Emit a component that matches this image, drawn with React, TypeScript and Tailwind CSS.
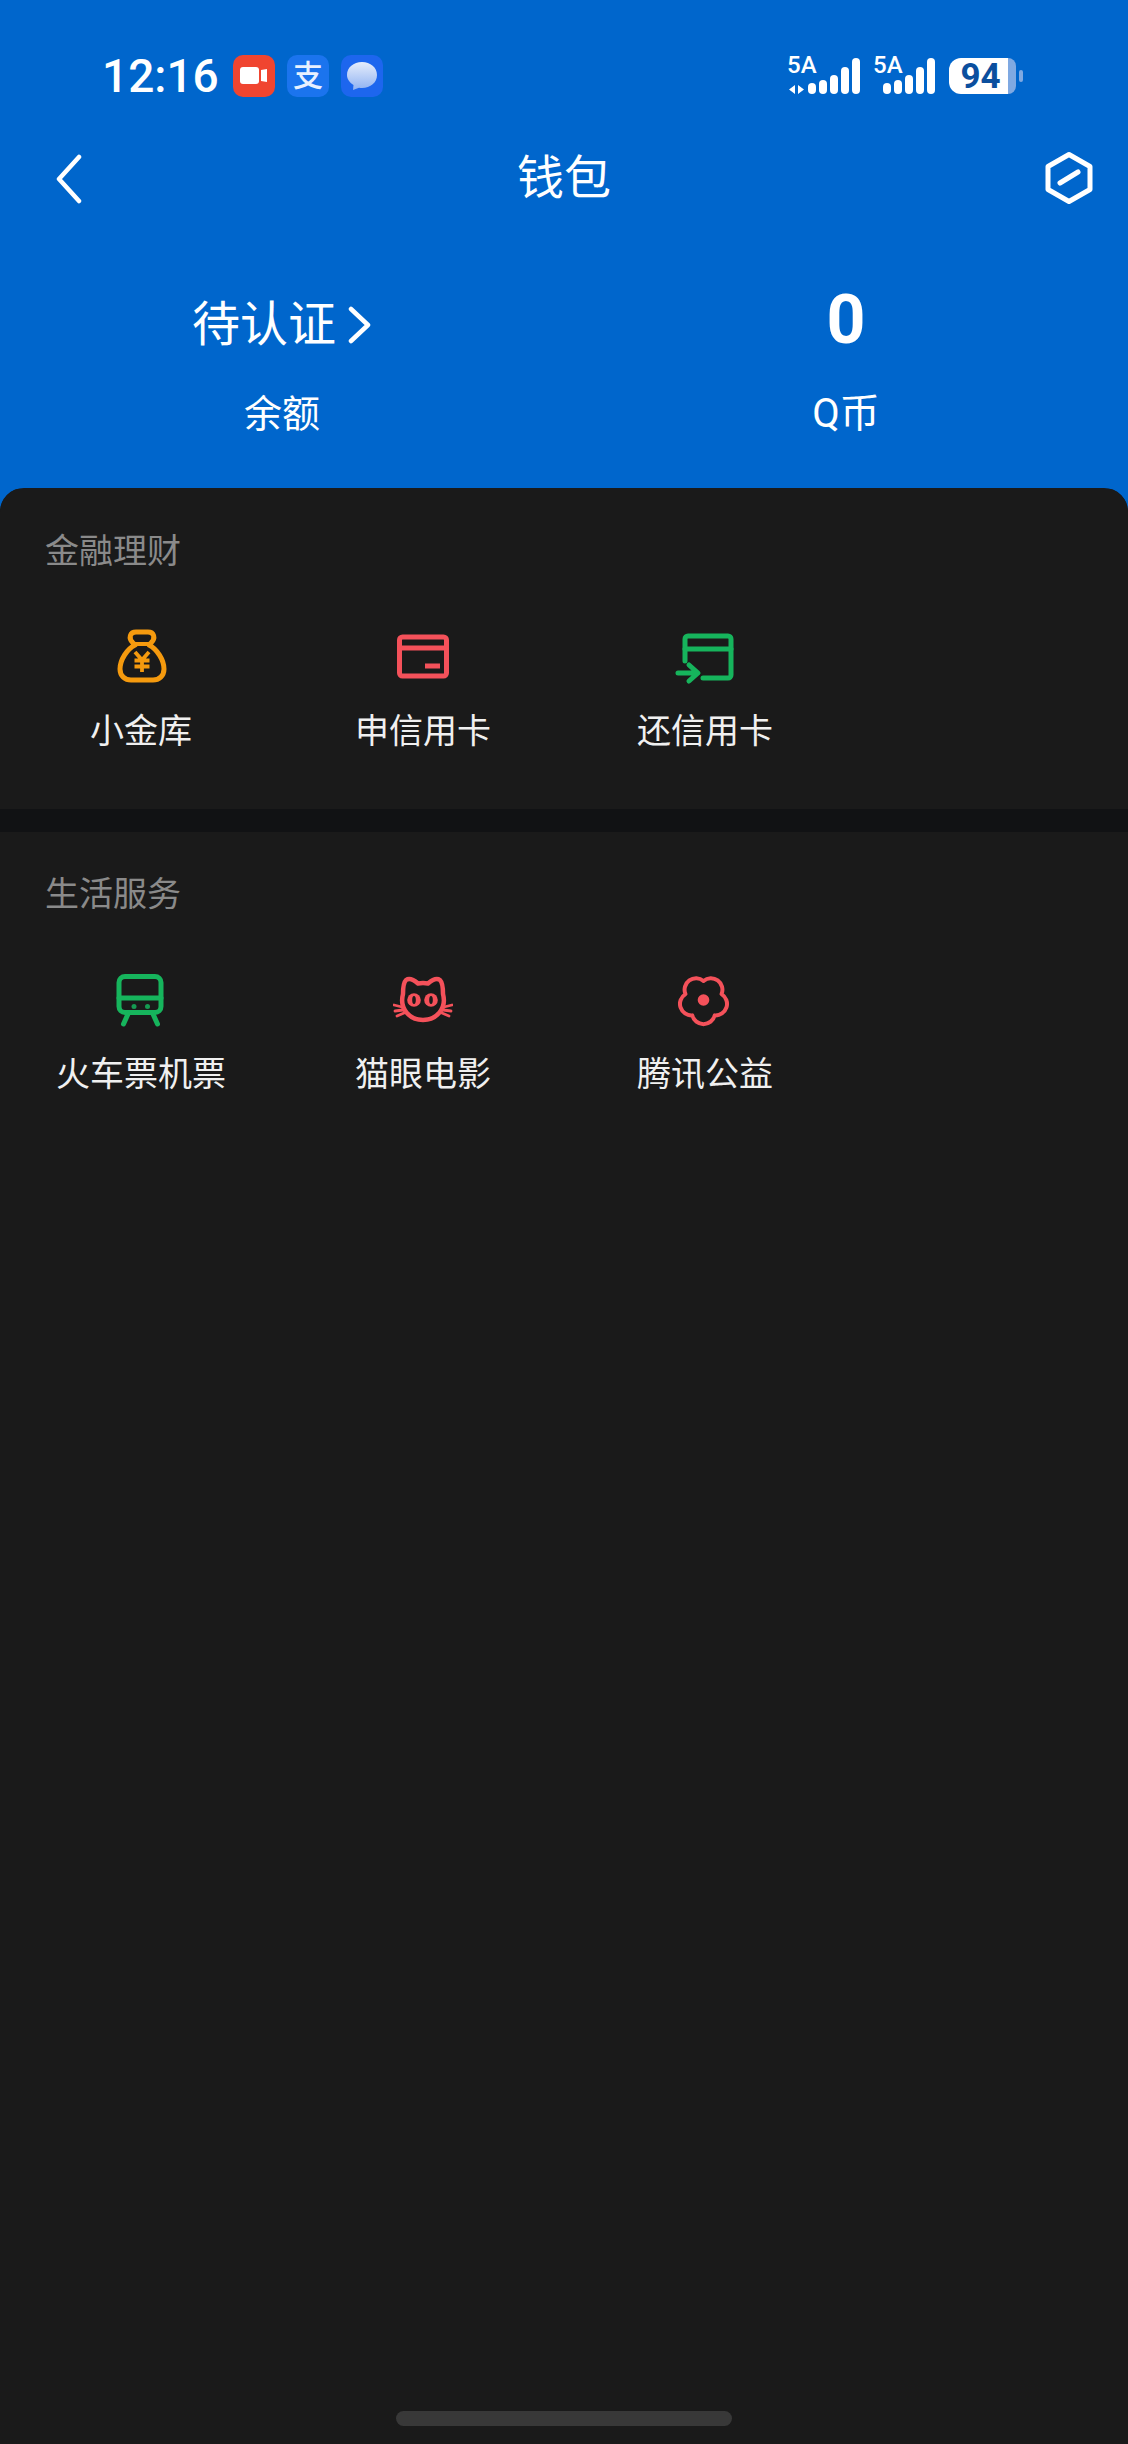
const FONT = "font-['Roboto','Noto_Sans_CJK_SC',sans-serif]";

function BagIcon() {
  return (
    <svg width="60" height="60" viewBox="0 0 60 60" fill="none" stroke="#f59a0e" strokeWidth="5" strokeLinecap="round" strokeLinejoin="round">
      <path d="M22 16C17 11 19 5 25 5h12c6 0 8 6 3 11l-2 2c8 4 15 15 15 24 0 7-5 11-11 11H20c-6 0-11-4-11-11 0-9 7-20 15-24z" />
      <path d="M24 17h14" strokeWidth="4" />
      <path d="M24 25l7 8 7-8M31 33v12M23.500 33.500h15M23.500 39.500h15" strokeWidth="3.800" strokeLinecap="butt" strokeLinejoin="miter" />
    </svg>
  );
}

function CardIcon() {
  return (
    <svg width="60" height="60" viewBox="0 0 60 60" fill="none" stroke="#f4515a" strokeWidth="5" strokeLinejoin="round">
      <rect x="6.500" y="10" width="47" height="39" rx="3" />
      <path d="M6.500 21h47" />
      <path d="M32 39h15" />
    </svg>
  );
}

function RepayIcon() {
  return (
    <svg width="60" height="60" viewBox="0 0 60 60" fill="none" stroke="#16b45c" strokeWidth="5" strokeLinecap="round" strokeLinejoin="round">
      <path d="M10 34V12a3 3 0 0 1 3-3h40a3 3 0 0 1 3 3v36a3 3 0 0 1-3 3H28" />
      <path d="M10 22h46" />
      <path d="M3 46h19M14 38l9 8-9 8" />
    </svg>
  );
}

function TrainIcon() {
  return (
    <svg width="60" height="60" viewBox="0 0 60 60" fill="none" stroke="#16b45c" strokeWidth="5" strokeLinecap="round" strokeLinejoin="round">
      <rect x="8" y="6.500" width="42" height="36" rx="6" />
      <path d="M8 28h42" />
      <path d="M17 44l-4.500 10M42 44l4.500 10" />
      <circle cx="23" cy="36.500" r="2.500" fill="#159a52" stroke="none" />
      <circle cx="36.500" cy="36.500" r="2.500" fill="#159a52" stroke="none" />
    </svg>
  );
}

function CatIcon() {
  return (
    <svg width="60" height="60" viewBox="0 0 60 60" fill="none" stroke="#f4515a" strokeWidth="4.500" strokeLinecap="round" strokeLinejoin="round">
      <path d="M13 10c3-2 8 0 12 3.500 3-.5 7-.5 10 0C39 10 44 8 47 10c2 2 3 6 3 14 4 15-7 26-20 26S6 39 10 24c0-8 1-12 3-14z" />
      <circle cx="21" cy="30" r="6.800" fill="#f4515a" stroke="none" />
      <circle cx="38" cy="30" r="6.800" fill="#f4515a" stroke="none" />
      <ellipse cx="21" cy="30" rx="1.800" ry="4" fill="#1a1a1a" stroke="none" />
      <ellipse cx="38" cy="30" rx="1.800" ry="4" fill="#1a1a1a" stroke="none" />
      <path d="M1 35l8 2M2 41l8-1M4 46l7-3M59 35l-8 2M58 41l-8-1M56 46l-7-3" strokeWidth="2.800" />
    </svg>
  );
}

function FlowerIcon() {
  // 五瓣花轮廓
  const notch = [0, 1, 2, 3, 4].map((i) => {
    const a = ((-90 + i * 72) * Math.PI) / 180;
    return [28.500 + 19 * Math.cos(a), 30 + 19 * Math.sin(a)];
  });
  const d =
    `M${notch[4][0]} ${notch[4][1]} ` +
    notch.map(([x, y]) => `A11.500 11.500 0 0 1 ${x} ${y}`).join(' ') +
    'Z';
  return (
    <svg width="60" height="60" viewBox="0 0 60 60" fill="none" stroke="#f4515a" strokeWidth="4" strokeLinejoin="round">
      <path d={d} />
      <circle cx="28.500" cy="30" r="5.800" fill="#f4515a" stroke="none" />
    </svg>
  );
}

function ServiceItem({ label, icon }: { label: string; icon: React.ReactNode }) {
  return (
    <div className="flex w-[282px] flex-col items-center">
      <div className="flex h-[60px] items-center justify-center">{icon}</div>
      <span className="mt-[22px] text-[34px] leading-[44px] text-[#f0f0f0]">{label}</span>
    </div>
  );
}

function Section({ title, children }: { title: string; children: React.ReactNode }) {
  return (
    <section className="bg-[#1a1a1a] pt-[40px]">
      <h2 className="pl-[45px] text-[34px] leading-[44px] font-normal text-[#8a8a8a]">{title}</h2>
      <div className="mt-[54px] flex">{children}</div>
    </section>
  );
}

function Signal({ first }: { first?: boolean }) {
  const bars = ['h-[11px]', 'h-[14px]', 'h-[19px]', 'h-[27px]', 'h-[36px]'];
  return (
    <div className={`relative flex h-[36px] items-end justify-end gap-[3px] ${first ? 'w-[73px]' : 'w-[62px]'}`}>
      <span className="absolute top-[-1px] left-0 text-[24px] leading-[17px] font-medium text-white">5A</span>
      {first && (
        <svg className="absolute bottom-0 left-[2px]" width="16" height="9" viewBox="0 0 16 9" fill="#fff">
          <path d="M6 0v9L0 4.500zM9 0v9l6-4.500z" />
        </svg>
      )}
      {bars.map((h) => (
        <span key={h} className={`w-[8px] rounded-full bg-white ${h}`} />
      ))}
    </div>
  );
}

export default function App() {
  return (
    <div className={`flex min-h-[2444px] w-[1128px] flex-col bg-[#0066cc] ${FONT}`}>
      {/* 状态栏 */}
      <div className="flex h-[150px] items-start justify-between">
        <div className="flex items-center pt-[55px] pl-[102px]">
          <span className="w-[118px] text-[46px] leading-[42px] font-medium text-white">12:16</span>
          <span className="ml-[13px] flex h-[42px] w-[42px] items-center justify-center rounded-[10px] bg-[#f04530]">
            <svg width="28" height="18" viewBox="0 0 28 18" fill="#fff">
              <rect x="0" y="0" width="19" height="17" rx="3" />
              <path d="M21 3l6-1v13l-6-1z" />
            </svg>
          </span>
          <span className="ml-[12px] flex h-[42px] w-[42px] items-center justify-center rounded-[10px] bg-[#1b74ee] text-[30px] leading-none font-medium text-[#e8f1ff]">支</span>
          <span className="ml-[12px] flex h-[42px] w-[42px] items-center justify-center rounded-[10px] bg-[#1d66ee]">
            <svg width="32" height="30" viewBox="0 0 32 30">
              <defs>
                <linearGradient id="bubble" x1="0" y1="0" x2="0" y2="1">
                  <stop offset="0" stopColor="#e6edfb" />
                  <stop offset="1" stopColor="#8fb2f2" />
                </linearGradient>
              </defs>
              <path d="M16 1c8.500 0 15 5.500 15 13s-6.500 13-15 13c-1 0-2-.1-3-.3L7 29l.5-5C3.500 21.500 1 18 1 14 1 6.500 7.500 1 16 1z" fill="url(#bubble)" />
            </svg>
          </span>
        </div>
        <div className="mr-[105px] flex items-start pt-[58px]">
          <Signal first />
          <div className="ml-[13px]">
            <Signal />
          </div>
          <div className="ml-[14px] flex items-center">
            <div className="flex h-[36px] w-[59px] items-center justify-center rounded-l-[12px] bg-white pl-[4px] text-[35px] leading-none font-bold text-[#0b4f9e]">94</div>
            <div className="h-[36px] w-[8px] rounded-r-[8px] bg-[#7fa9e2]" />
            <div className="ml-[3px] h-[12px] w-[4px] rounded-full bg-[#7fa9e2]" />
          </div>
        </div>
      </div>

      {/* 标题栏 */}
      <div className="grid h-[56px] grid-cols-[1fr_auto_1fr] items-center px-[33px]">
        <svg className="ml-[21px]" width="30" height="52" viewBox="0 0 30 52" fill="none" stroke="#fff" strokeWidth="4.500" strokeLinecap="round" strokeLinejoin="round">
          <path d="M25 5L5 27l20 22" />
        </svg>
        <span className="text-[47px] leading-[56px] text-white">钱包</span>
        <svg className="justify-self-end" width="52" height="56" viewBox="0 0 52 56" fill="none" stroke="#fff" strokeWidth="5" strokeLinejoin="round" strokeLinecap="round">
          <path d="M26 4.500l21 12v23l-21 12-21-12v-23z" />
          <path d="M17 33l18-11" />
        </svg>
      </div>

      {/* 余额 */}
      <div className="flex h-[282px] items-start pt-[87px]">
        <div className="flex w-[564px] flex-col items-center">
          <div className="flex h-[64px] items-center">
            <span className="text-[48px] leading-[64px] text-white">待认证</span>
            <svg className="ml-[10px]" width="26" height="38" viewBox="0 0 26 38" fill="none" stroke="#fff" strokeWidth="4.500" strokeLinecap="round" strokeLinejoin="round">
              <path d="M5 3l17 16L5 35" />
            </svg>
          </div>
          <span className="mt-[32px] text-[38px] leading-[50px] text-white">余额</span>
        </div>
        <div className="flex w-[564px] flex-col items-center">
          <span className="h-[64px] text-[68px] leading-[54px] font-bold text-white">0</span>
          <span className="mt-[32px] text-[40px] leading-[50px] text-white">Q币</span>
        </div>
      </div>

      {/* 列表 */}
      <main className="flex flex-1 flex-col overflow-hidden rounded-t-[24px] bg-[#1a1a1a]">
        <div className="h-[321px] pt-[1px]">
          <Section title="金融理财">
            <ServiceItem label="小金库" icon={<BagIcon />} />
            <ServiceItem label="申信用卡" icon={<CardIcon />} />
            <ServiceItem label="还信用卡" icon={<RepayIcon />} />
          </Section>
        </div>
        <div className="h-[23px] bg-[#111214]" />
        <Section title="生活服务">
          <ServiceItem label="火车票机票" icon={<TrainIcon />} />
          <ServiceItem label="猫眼电影" icon={<CatIcon />} />
          <ServiceItem label="腾讯公益" icon={<FlowerIcon />} />
        </Section>
        <div className="mt-auto mb-[18px] flex justify-center">
          <div className="h-[15px] w-[336px] rounded-full bg-[#383838]" />
        </div>
      </main>
    </div>
  );
}
